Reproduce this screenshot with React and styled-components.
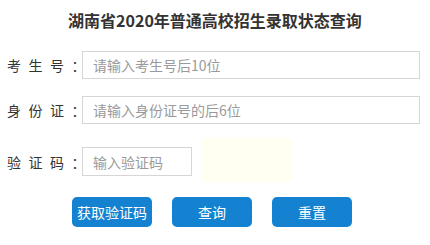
import React from "react";
import styled, { createGlobalStyle } from "styled-components";

const Global = createGlobalStyle`
  html, body { margin: 0; padding: 0; background: #fff; }
  body { font-family: "Noto Sans CJK SC", "Noto Sans", sans-serif; color: #333; }
`;

const Page = styled.div`
  width: 430px;
  height: 245px;
  box-sizing: border-box;
  padding: 0 10px 0 7px;
`;

const Title = styled.h1`
  margin: 0;
  height: 40px;
  line-height: 40px;
  text-align: center;
  font-size: 16px;
  font-weight: bold;
  color: #333;
  padding-left: 3px;
`;

const Form = styled.div`
  display: flex;
  flex-direction: column;
  margin-top: 11px;
`;

const Row = styled.div`
  display: flex;
  align-items: center;
  margin-top: ${(p) => p.$top || 0}px;
`;

const Label = styled.label`
  width: 75px;
  flex: none;
  font-size: 14px;
  letter-spacing: 7.5px;
  color: #333;
  white-space: nowrap;
`;

const Input = styled.input`
  box-sizing: border-box;
  width: ${(p) => p.$w}px;
  height: ${(p) => p.$h || 28}px;
  border: 1px solid #d6d6d6;
  padding: 0 10px;
  font-family: "Noto Sans CJK SC", sans-serif;
  font-size: 14px;
  color: #333;
  outline: none;
  &::placeholder { color: #9a9a9a; }
`;

const Captcha = styled.div`
  width: 90px;
  height: 44px;
  margin-left: 10px;
  margin-top: -3px;
  background: #fffff2;
`;

const Buttons = styled.div`
  display: flex;
  gap: 20px;
  padding-left: 65px;
  margin-top: 15px;
`;

const Button = styled.button`
  width: 80px;
  height: 30px;
  border: none;
  border-radius: 5px;
  background: #1482d0;
  color: #fff;
  font-family: "Noto Sans CJK SC", sans-serif;
  font-size: 14px;
  padding: 0;
  cursor: pointer;
`;

export default function App() {
  return (
    <Page>
      <Global />
      <Title>湖南省2020年普通高校招生录取状态查询</Title>
      <Form>
        <Row>
          <Label>考生号：</Label>
          <Input $w={339} placeholder="请输入考生号后10位" />
        </Row>
        <Row $top={17}>
          <Label>身份证：</Label>
          <Input $w={339} placeholder="请输入身份证号的后6位" />
        </Row>
        <Row $top={17}>
          <Label>验证码：</Label>
          <Input $w={110} $h={29} placeholder="输入验证码" />
          <Captcha />
        </Row>
      </Form>
      <Buttons>
        <Button>获取验证码</Button>
        <Button>查询</Button>
        <Button>重置</Button>
      </Buttons>
    </Page>
  );
}
